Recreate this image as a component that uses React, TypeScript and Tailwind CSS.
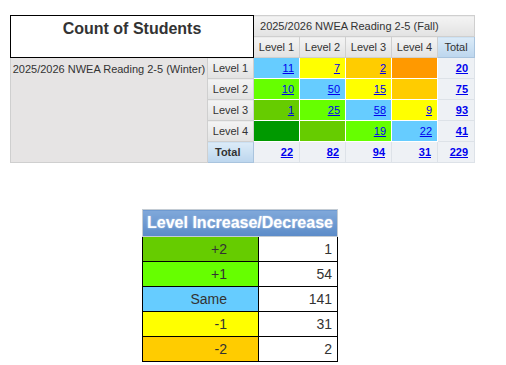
import React from 'react';

type Cell = { v?: number; bg: string };

const rows: { label: string; cells: Cell[]; total: number }[] = [
    { label: 'Level 1', cells: [{ v: 11, bg: 'bg-[#66ccff]' }, { v: 7, bg: 'bg-[#ffff00]' }, { v: 2, bg: 'bg-[#ffcc00]' }, { bg: 'bg-[#ff9900]' }], total: 20 },
    { label: 'Level 2', cells: [{ v: 10, bg: 'bg-[#66ff00]' }, { v: 50, bg: 'bg-[#66ccff]' }, { v: 15, bg: 'bg-[#ffff00]' }, { bg: 'bg-[#ffcc00]' }], total: 75 },
    { label: 'Level 3', cells: [{ v: 1, bg: 'bg-[#66cc00]' }, { v: 25, bg: 'bg-[#66ff00]' }, { v: 58, bg: 'bg-[#66ccff]' }, { v: 9, bg: 'bg-[#ffff00]' }], total: 93 },
    { label: 'Level 4', cells: [{ bg: 'bg-[#009900]' }, { bg: 'bg-[#66cc00]' }, { v: 19, bg: 'bg-[#66ff00]' }, { v: 22, bg: 'bg-[#66ccff]' }], total: 41 },
];

const colTotals = [22, 82, 94, 31, 229];

const changes = [
    { label: '+2', v: 1, bg: 'bg-[#66cc00]' },
    { label: '+1', v: 54, bg: 'bg-[#66ff00]' },
    { label: 'Same', v: 141, bg: 'bg-[#66ccff]' },
    { label: '-1', v: 31, bg: 'bg-[#ffff00]' },
    { label: '-2', v: 2, bg: 'bg-[#ffcc00]' },
];

const greyHead = 'border border-[#cfcfcf] bg-gradient-to-b from-[#f4f4f4] to-[#e2e2e2] text-[#333]';
const blueHead = 'border border-[#a9c4de] bg-gradient-to-b from-[#dcebf8] to-[#bcd6ee] text-[#333]';
const totalCell = 'border border-[#dde2e8] bg-[#eef1f5] text-right pr-[6px] font-bold';

const Num = ({ v, bold }: { v: number; bold?: boolean }) => (
    <a href="#" className={`text-[#0000ee] underline ${bold ? 'font-bold' : ''}`}>{v}</a>
);

export default function App() {
    return (
        <div className="w-[506px] h-[365px] bg-white pt-[15px] pl-[10px] font-['Liberation_Sans',Arial,sans-serif]">
            <table className="table-fixed border-collapse text-[11px] w-[464px]">
                <colgroup>
                    <col className="w-[197px]" />
                    <col className="w-[46px]" />
                    <col className="w-[46px]" />
                    <col className="w-[46px]" />
                    <col className="w-[46px]" />
                    <col className="w-[46px]" />
                    <col className="w-[37px]" />
                </colgroup>
                <tbody>
                    <tr className="h-[21px]">
                        <td colSpan={2} rowSpan={2} className="border border-black bg-white text-center align-top pt-[1px] text-[16px] font-bold text-[#333]">
                            Count of Students
                        </td>
                        <td colSpan={5} className={`${greyHead} text-left pl-[6px]`}>
                            2025/2026 NWEA Reading 2-5 (Fall)
                        </td>
                    </tr>
                    <tr className="h-[21px]">
                        {['Level 1', 'Level 2', 'Level 3', 'Level 4'].map(l => (
                            <td key={l} className={`${greyHead} text-center`}>{l}</td>
                        ))}
                        <td className={`${blueHead} text-center`}>Total</td>
                    </tr>
                    {rows.map((r, i) => (
                        <tr key={r.label} className="h-[21px]">
                            {i === 0 && (
                                <td rowSpan={5} className="border border-[#cfcfcf] bg-[#e6e4e4] text-[#333] text-center align-top pt-[3px]">
                                    2025/2026 NWEA Reading 2-5 (Winter)
                                </td>
                            )}
                            <td className={`${greyHead} text-center`}>{r.label}</td>
                            {r.cells.map((c, j) => (
                                <td key={j} className={`${c.bg} border border-white text-right pr-[5px]`}>
                                    {c.v !== undefined && <Num v={c.v} />}
                                </td>
                            ))}
                            <td className={totalCell}><Num v={r.total} bold /></td>
                        </tr>
                    ))}
                    <tr className="h-[21px]">
                        <td className={`${blueHead} text-left pl-[7px] font-bold`}>Total</td>
                        {colTotals.map((t, j) => (
                            <td key={j} className={totalCell}><Num v={t} bold /></td>
                        ))}
                    </tr>
                </tbody>
            </table>

            <table className="table-fixed border-collapse mt-[46px] ml-[132px] w-[195px] text-[14px] text-[#333]">
                <colgroup>
                    <col className="w-[116px]" />
                    <col className="w-[79px]" />
                </colgroup>
                <thead>
                    <tr className="h-[27px]">
                        <th colSpan={2} className="border border-[#c4ccd4] bg-gradient-to-b from-[#80a8da] to-[#5b8bc8] text-white text-[16px] font-bold text-center [text-shadow:0_0_2px_rgba(255,255,255,0.6)]">
                            Level Increase/Decrease
                        </th>
                    </tr>
                </thead>
                <tbody>
                    {changes.map(c => (
                        <tr key={c.label} className="h-[25px]">
                            <td className={`${c.bg} border border-black text-right pr-[31px]`}>{c.label}</td>
                            <td className="bg-white border border-black text-right pr-[5px]">{c.v}</td>
                        </tr>
                    ))}
                </tbody>
            </table>
        </div>
    );
}
